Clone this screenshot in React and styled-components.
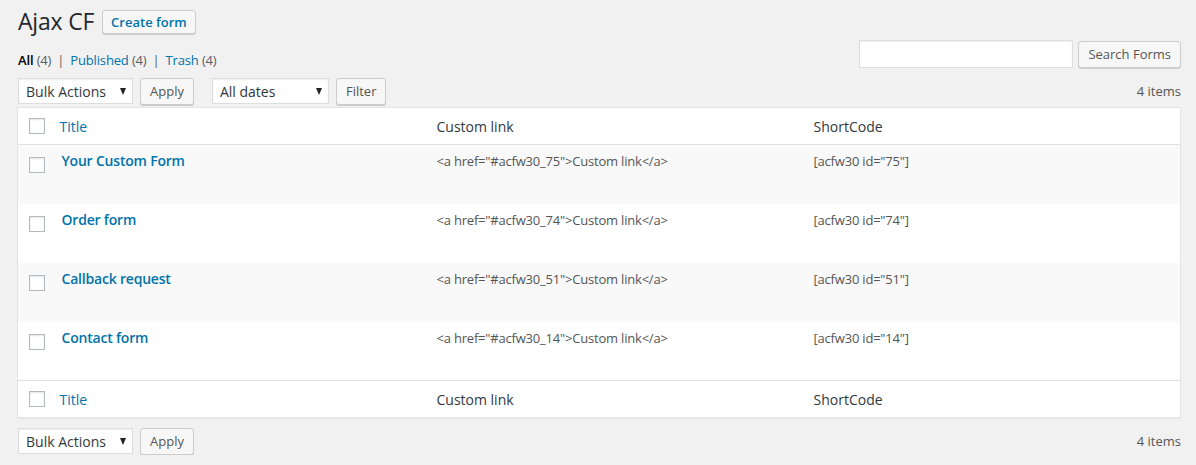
import React from "react";
import styled, { createGlobalStyle } from "styled-components";

const GlobalStyle = createGlobalStyle`
  html, body {
    margin: 0;
    padding: 0;
    background: #f1f1f1;
    color: #23282d;
    font-family: "Open Sans", "Noto Sans", sans-serif;
    font-size: 13px;
  }
`;

const forms = [
  { id: 75, title: "Your Custom Form" },
  { id: 74, title: "Order form" },
  { id: 51, title: "Callback request" },
  { id: 14, title: "Contact form" },
];

const Wrap = styled.div`
  padding: 7px 15px 0 17px;
`;

const Heading = styled.div`
  display: flex;
  align-items: center;
  height: 29px;
  padding-left: 1px;
`;

const Title = styled.h1`
  margin: 0;
  font-size: 23px;
  font-weight: 400;
  line-height: 29px;
  color: #23282d;
  letter-spacing: -0.2px;
`;

const Button = styled.button`
  font-family: inherit;
  font-size: 13px;
  height: ${(p) => (p.small ? "24px" : "27px")};
  padding: 0 ${(p) => (p.small ? "8px" : "9px")};
  margin-left: ${(p) => p.ml || 0}px;
  color: ${(p) => (p.primary ? "#0073aa" : "#555")};
  font-weight: ${(p) => (p.primary ? 600 : 400)};
  background: #f7f7f7;
  border: 1px solid #ccc;
  border-radius: 3px;
  box-shadow: 0 1px 0 #ccc;
  cursor: pointer;
  white-space: nowrap;
`;

const TopRow = styled.div`
  display: flex;
  justify-content: space-between;
  align-items: flex-end;
  margin-top: 4px;
`;

const Views = styled.ul`
  list-style: none;
  margin: 0 0 0 1px;
  padding: 0;
  display: flex;
  color: #666;
  line-height: 16px;
  letter-spacing: -0.15px;
`;

const View = styled.li`
  white-space: pre;
  a {
    color: ${(p) => (p.current ? "#000" : "#0073aa")};
    font-weight: ${(p) => (p.current ? 600 : 400)};
    text-decoration: none;
  }
  span {
    color: #555d66;
  }
`;

const Sep = styled.span`
  color: #ccc;
  padding: 0 6px;
`;

const SearchBox = styled.div`
  display: flex;
  align-items: center;
  gap: 5px;
`;

const SearchInput = styled.input`
  width: 200px;
  height: 26px;
  padding: 0 6px;
  border: 1px solid #ddd;
  background: #fff;
  box-shadow: inset 0 1px 2px rgba(0, 0, 0, 0.07);
  box-sizing: content-box;
  outline: none;
`;

const TableNav = styled.div`
  display: flex;
  align-items: center;
  height: 28px;
  margin: ${(p) => (p.bottom ? "9px 0 0" : "9px 0 2px")};
`;

const Actions = styled.div`
  display: flex;
  align-items: center;
  margin-right: 17px;
  padding-left: 1px;
`;

const Select = styled.div`
  display: flex;
  align-items: center;
  justify-content: space-between;
  width: ${(p) => p.w}px;
  height: 26px;
  box-sizing: border-box;
  padding: 0 6px 0 7px;
  margin-right: 7px;
  background: #fff;
  border: 1px solid #ddd;
  box-shadow: inset 0 1px 2px rgba(0, 0, 0, 0.07);
  font-size: 14px;
  color: #32373c;
`;

const Arrow = styled.span`
  width: 0;
  height: 0;
  border-left: 3.5px solid transparent;
  border-right: 3.5px solid transparent;
  border-top: 7px solid #222;
`;

const Count = styled.div`
  margin-left: auto;
  color: #555;
  font-size: 13px;
`;

const Table = styled.table`
  width: 100%;
  border-collapse: collapse;
  table-layout: fixed;
  background: #fff;
  border: 1px solid #e5e5e5;
  box-shadow: 0 1px 1px rgba(0, 0, 0, 0.04);
`;

const CheckCol = styled.col`
  width: 32px;
`;

const Th = styled.th`
  text-align: left;
  font-weight: 400;
  font-size: 14px;
  height: 36px;
  padding: 0 10px;
  color: #32373c;
  border-${(p) => (p.foot ? "top" : "bottom")}: 1px solid #e1e1e1;
  a {
    color: #0073aa;
    text-decoration: none;
  }
`;

const CheckTh = styled(Th)`
  padding: 0 0 0 11px;
`;

const Row = styled.tr`
  background: ${(p) => (p.striped ? "#f9f9f9" : "#fff")};
`;

const Td = styled.td`
  vertical-align: top;
  height: 59px;
  box-sizing: border-box;
  padding: 8px 10px 0;
  font-size: 13px;
  color: #555;
  line-height: 16px;
  letter-spacing: -0.2px;
`;

const CheckTd = styled(Td)`
  padding: 12px 0 0 11px;
`;

const RowTitle = styled.a`
  display: inline-block;
  margin-left: 2px;
  font-size: 14px;
  font-weight: 600;
  color: #0073aa;
  text-decoration: none;
  line-height: 16px;
  letter-spacing: -0.2px;
`;

const Checkbox = styled.span`
  display: block;
  width: 14px;
  height: 14px;
  border: 1px solid #b4b9be;
  background: #fff;
  box-shadow: inset 0 1px 2px rgba(0, 0, 0, 0.1);
`;

const Nav = ({ bottom }) => (
  <TableNav bottom={bottom}>
    <Actions>
      <Select w={115}>
        Bulk Actions <Arrow />
      </Select>
      <Button>Apply</Button>
    </Actions>
    {!bottom && (
      <Actions>
        <Select w={117}>
          All dates <Arrow />
        </Select>
        <Button>Filter</Button>
      </Actions>
    )}
    <Count>4 items</Count>
  </TableNav>
);

const HeadRow = ({ foot }) => (
  <tr>
    <CheckTh foot={foot}>
      <Checkbox />
    </CheckTh>
    <Th foot={foot}>
      <a href="#title">Title</a>
    </Th>
    <Th foot={foot}>Custom link</Th>
    <Th foot={foot}>ShortCode</Th>
  </tr>
);

export default function App() {
  return (
    <Wrap>
      <GlobalStyle />
      <Heading>
        <Title>Ajax CF</Title>
        <Button primary small ml={8}>
          Create form
        </Button>
      </Heading>
      <TopRow>
        <Views>
          <View current>
            <a href="#all">All</a> <span>(4)</span>
            <Sep>|</Sep>
          </View>
          <View>
            <a href="#published">
              Published <span>(4)</span>
            </a>
            <Sep>|</Sep>
          </View>
          <View>
            <a href="#trash">
              Trash <span>(4)</span>
            </a>
          </View>
        </Views>
        <SearchBox>
          <SearchInput />
          <Button>Search Forms</Button>
        </SearchBox>
      </TopRow>
      <Nav />
      <Table>
        <colgroup>
          <CheckCol />
          <col />
          <col />
          <col />
        </colgroup>
        <thead>
          <HeadRow />
        </thead>
        <tbody>
          {forms.map((f, i) => (
            <Row key={f.id} striped={i % 2 === 0}>
              <CheckTd>
                <Checkbox />
              </CheckTd>
              <Td>
                <RowTitle href={`#form-${f.id}`}>{f.title}</RowTitle>
              </Td>
              <Td>{`<a href="#acfw30_${f.id}">Custom link</a>`}</Td>
              <Td>{`[acfw30 id="${f.id}"]`}</Td>
            </Row>
          ))}
        </tbody>
        <tfoot>
          <HeadRow foot />
        </tfoot>
      </Table>
      <Nav bottom />
    </Wrap>
  );
}
